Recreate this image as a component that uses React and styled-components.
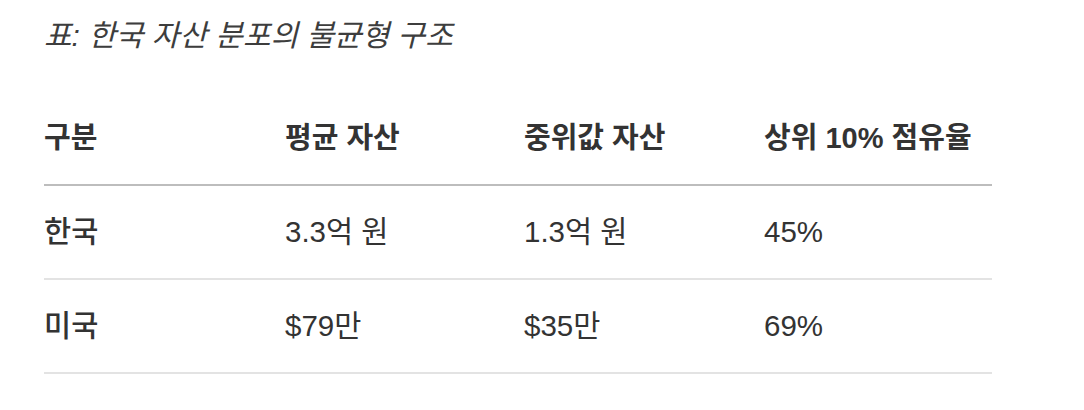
import React from "react";
import styled, { createGlobalStyle } from "styled-components";

const Global = createGlobalStyle`
  html, body { margin: 0; padding: 0; background: #ffffff; }
  body {
    font-family: "Liberation Sans", "Noto Sans CJK KR", sans-serif;
    color: #333333;
  }
`;

const Page = styled.div`
  padding: 17px 0 0 44px;
  width: 948px;
`;

const Caption = styled.div`
  font-size: 30px;
  line-height: 38px;
  font-style: italic;
  color: #3d3d3d;
  margin-bottom: 37px;
`;

const Table = styled.table`
  width: 948px;
  border-collapse: collapse;
  table-layout: fixed;
`;

const Col = styled.col`
  width: ${(p) => p.$w}px;
`;

const HeadCell = styled.th`
  text-align: left;
  font-weight: 700;
  font-size: 29px;
  line-height: 40px;
  padding: 26px 0;
  color: #333333;
  border-bottom: 2px solid #bdbdbd;
`;

const Cell = styled.td`
  text-align: left;
  font-weight: ${(p) => (p.$strong ? 500 : 400)};
  font-size: 29.5px;
  line-height: 40px;
  padding: 26px 0;
  color: #333333;
  border-bottom: 2px solid #e3e3e3;
`;

const headers = ["구분", "평균 자산", "중위값 자산", "상위 10% 점유율"];
const rows = [
  ["한국", "3.3억 원", "1.3억 원", "45%"],
  ["미국", "$79만", "$35만", "69%"],
];
const widths = [241, 239, 240, 228];

export default function App() {
  return (
    <>
      <Global />
      <Page>
        <Caption>표: 한국 자산 분포의 불균형 구조</Caption>
        <Table>
          <colgroup>
            {widths.map((w, i) => (
              <Col key={i} $w={w} />
            ))}
          </colgroup>
          <thead>
            <tr>
              {headers.map((h) => (
                <HeadCell key={h}>{h}</HeadCell>
              ))}
            </tr>
          </thead>
          <tbody>
            {rows.map((r) => (
              <tr key={r[0]}>
                {r.map((c, i) => (
                  <Cell key={i} $strong={i === 0}>
                    {c}
                  </Cell>
                ))}
              </tr>
            ))}
          </tbody>
        </Table>
      </Page>
    </>
  );
}
